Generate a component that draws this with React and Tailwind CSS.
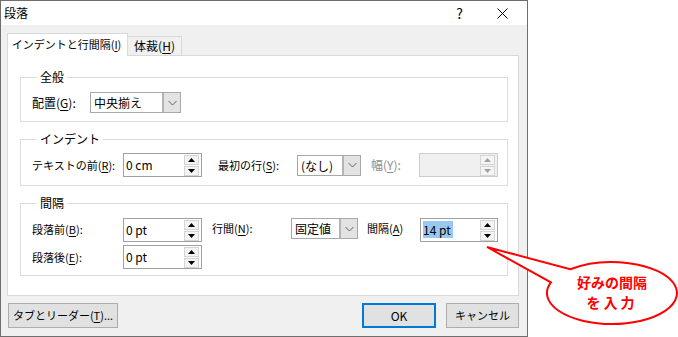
import React from 'react';

const Mn = ({ children }) => <span className="underline underline-offset-[2px]">{children}</span>;

const Chevron = () => (
  <svg width="9" height="6" viewBox="0 0 9 6">
    <path d="M0.5 1 L4.5 5 L8.5 1" fill="none" stroke="#606060" strokeWidth="1" />
  </svg>
);

const Tri = ({ up, color = '#000' }) => (
  <svg width="7" height="4" viewBox="0 0 7 4">
    <path d={up ? 'M3.5 0 L7 4 L0 4 Z' : 'M0 0 L7 0 L3.5 4 Z'} fill={color} />
  </svg>
);

const Combo = ({ value, width }) => (
  <div className={`flex h-[21px] ${width} border border-[#a8a8a8] bg-white`}>
    <div className="flex-1 whitespace-nowrap pl-[3px] text-[12px] leading-[19px] text-black">{value}</div>
    <div className="flex w-[18px] items-center justify-center border-l-2 border-[#b4b4b4] bg-[#e3e3e3]">
      <Chevron />
    </div>
  </div>
);

const Spin = ({ value, width, disabled, selected }) => (
  <div
    className={`flex h-[24px] ${width} items-center border pr-[2px] ${
      disabled ? 'border-[#cccccc] bg-[#f0f0f0]' : 'border-[#a0a0a0] bg-white'
    }`}
  >
    <div className="flex-1 whitespace-nowrap pl-[2px] text-[12px] leading-[18px] text-black">
      {selected ? <span className="bg-[#99c9ef] pr-[2px]">{value}</span> : value}
    </div>
    <div className="flex w-[15px] flex-col gap-[1px]">
      <div className="flex h-[10px] items-center justify-center border border-[#d4d4d4] bg-[#f4f4f4]">
        <Tri up color={disabled ? '#a0a0a0' : '#000'} />
      </div>
      <div className="flex h-[10px] items-center justify-center border border-[#d4d4d4] bg-[#f4f4f4]">
        <Tri color={disabled ? '#a0a0a0' : '#000'} />
      </div>
    </div>
  </div>
);

const Group = ({ title, className, children }) => (
  <fieldset className={`border border-[#dcdcdc] pl-[11px] ${className}`}>
    <legend className="ml-[5px] px-[3px] text-[12px] leading-[16px] text-black">{title}</legend>
    {children}
  </fieldset>
);

const Btn = ({ children, width, primary }) => (
  <div
    className={`flex h-[25px] ${width} items-center justify-center whitespace-nowrap bg-[#e1e1e1] text-black ${
      primary ? 'border-2 border-[#0078d7]' : 'border border-[#adadad]'
    }`}
  >
    {children}
  </div>
);

export default function App() {
  return (
    <div className="relative h-[337px] w-[678px] overflow-hidden whitespace-nowrap bg-white font-['Noto_Sans_CJK_JP',sans-serif] text-[11px] text-black">
      {/* Dialog */}
      <div className="flex h-[337px] w-[528px] flex-col border border-[#6f6f6f]">
        {/* Title bar */}
        <div className="flex h-[24px] items-center bg-white pl-[3px]">
          <span className="text-[12px]">段落</span>
          <span className="ml-auto mr-[34px] text-[14px] leading-none">?</span>
          <svg className="mr-[19px]" width="11" height="11" viewBox="0 0 11 11">
            <path d="M0.5 0.5 L10.5 10.5 M10.5 0.5 L0.5 10.5" stroke="#000" strokeWidth="1" />
          </svg>
        </div>

        {/* Body */}
        <div className="flex flex-1 flex-col bg-[#f0f0f0] pl-[6px] pr-[8px] pt-[8px]">
          {/* Tabs */}
          <div className="flex h-[22px] items-end">
            <div className="relative z-10 -mb-px flex h-[23px] w-[121px] items-center justify-center border-x border-t border-[#d9d9d9] bg-white pb-[1px] pr-[2px] text-[11px]">
              <span>インデントと行間隔(<Mn>I</Mn>)</span>
            </div>
            <div className="flex h-[19px] w-[54px] items-center justify-center border-r border-t border-[#d9d9d9] bg-[#f0f0f0] text-[12px]">
              体裁(<Mn>H</Mn>)
            </div>
          </div>

          {/* Panel */}
          <div className="flex h-[241px] flex-col border border-[#d9d9d9] bg-white pl-[12px] pr-[10px] pt-[13px]">
            <Group title="全般" className="pb-[8px] pt-[7px]">
              <div className="flex items-center">
                <span className="w-[58px] text-[12px]">
                  配置(<Mn>G</Mn>):
                </span>
                <Combo value="中央揃え" width="w-[91px]" />
              </div>
            </Group>

            <Group title="インデント" className="mt-[9px] pb-[8px] pt-[6px]">
              <div className="flex items-center">
                <span className="w-[91px]">
                  テキストの前(<Mn>R</Mn>):
                </span>
                <Spin value="0 cm" width="w-[79px]" />
                <span className="ml-[16px] w-[79px]">
                  最初の行(<Mn>S</Mn>):
                </span>
                <Combo value="(なし)" width="w-[64px]" />
                <span className="ml-[10px] w-[48px] text-[12px] text-[#8d8d8d]">
                  幅(<Mn>Y</Mn>):
                </span>
                <Spin value="" width="w-[79px]" disabled />
              </div>
            </Group>

            <Group title="間隔" className="mt-[9px] pb-[6px] pt-[7px]">
              <div className="flex flex-col gap-[3px]">
                <div className="flex items-start">
                  <span className="w-[91px] pt-[3px]">
                    段落前(<Mn>B</Mn>):
                  </span>
                  <Spin value="0 pt" width="w-[79px]" />
                  <span className="ml-[10px] w-[79px] pt-[2px]">
                    行間(<Mn>N</Mn>):
                  </span>
                  <Combo value="固定値" width="w-[67px]" />
                  <span className="ml-[9px] w-[53px] pt-[2px]">
                    間隔(<Mn>A</Mn>)
                  </span>
                  <Spin value="14 pt" width="w-[78px]" selected />
                </div>
                <div className="flex items-center">
                  <span className="w-[91px]">
                    段落後(<Mn>E</Mn>):
                  </span>
                  <Spin value="0 pt" width="w-[79px]" />
                </div>
              </div>
            </Group>
          </div>

          {/* Bottom buttons */}
          <div className="mt-[7px] flex items-center pl-[1px]">
            <Btn width="w-[110px]">
              タブとリーダー(<Mn>T</Mn>)...
            </Btn>
            <div className="ml-auto flex gap-[10px]">
              <Btn width="w-[74px]" primary>
                <span className="text-[12px]">OK</span>
              </Btn>
              <Btn width="w-[73px]">キャンセル</Btn>
            </div>
          </div>
        </div>
      </div>

      {/* Callout */}
      <svg className="absolute left-0 top-0" width="678" height="337" viewBox="0 0 678 337">
        <path
          d="M487 247 L570.2 269.3 A65 31 0 1 1 550.9 282.4 Z"
          fill="#fff"
          stroke="#ff0000"
          strokeWidth="2"
          strokeLinejoin="miter"
        />
      </svg>
      <div className="absolute left-[562px] top-[272px] flex w-[100px] flex-col items-center text-[14px] font-bold leading-[20px] text-[#ff0000]">
        <span>好みの間隔</span>
        <span className="tracking-[3px]">を入力</span>
      </div>
    </div>
  );
}
